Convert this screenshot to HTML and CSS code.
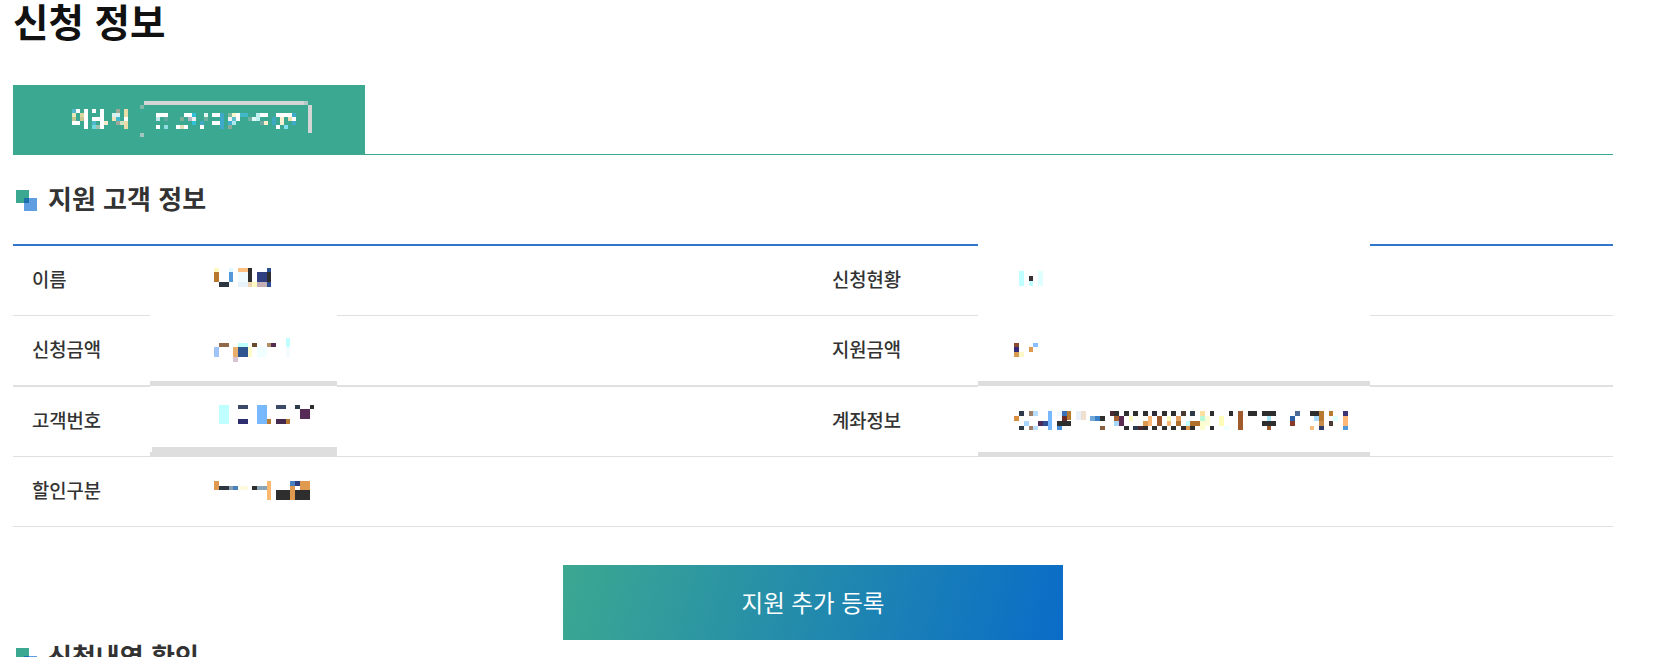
FILE: index.html
```html
<!DOCTYPE html>
<html lang="ko">
<head>
  <meta charset="UTF-8" />
  <title>신청 정보</title>
  <link rel="stylesheet" href="styles.css">
</head>
<body>
  <h1 class="page-title">신청 정보</h1>

  <div class="tab-bar">
    <div class="tab">
      <svg class="mosaic-tab" viewBox="0 0 780 135" width="260" height="45" aria-hidden="true">
        <rect x="237" y="18" width="480" height="12" fill="#d5d5d5"/><rect x="717" y="18" width="12" height="12" fill="#b5c9c5"/><rect x="729" y="30" width="12" height="84" fill="#d5d5d5"/><rect x="225" y="30" width="12" height="12" fill="#82b8aa"/><rect x="225" y="114" width="12" height="12" fill="#a5c6bf"/>
        <rect x="21" y="42" width="12" height="12" fill="#50b8c8"/><rect x="33" y="42" width="12" height="12" fill="#fff"/><rect x="21" y="54" width="12" height="12" fill="#e5e5b5"/><rect x="45" y="54" width="12" height="12" fill="#d8d8a0"/><rect x="21" y="66" width="12" height="12" fill="#c0c890"/><rect x="45" y="66" width="12" height="12" fill="#c8c890"/><rect x="21" y="78" width="24" height="12" fill="#fff"/><rect x="57" y="42" width="12" height="60" fill="#fff"/>
        <rect x="81" y="42" width="12" height="12" fill="#fff"/><rect x="81" y="66" width="24" height="12" fill="#fff"/><rect x="81" y="78" width="12" height="12" fill="#50b8c8"/><rect x="105" y="42" width="12" height="48" fill="#fff"/><rect x="81" y="90" width="12" height="12" fill="#70d8e0"/><rect x="93" y="90" width="12" height="12" fill="#a0c0b0"/><rect x="117" y="78" width="12" height="12" fill="#f5e8c8"/><rect x="105" y="90" width="12" height="12" fill="#fff"/>
        <rect x="153" y="42" width="12" height="12" fill="#a0a898"/><rect x="141" y="54" width="24" height="12" fill="#d8f0f0"/><rect x="177" y="42" width="12" height="24" fill="#e8dca8"/><rect x="141" y="66" width="12" height="12" fill="#f0e4b8"/><rect x="153" y="66" width="12" height="12" fill="#40b8d0"/><rect x="177" y="66" width="12" height="12" fill="#fff"/><rect x="153" y="78" width="12" height="12" fill="#a0a898"/><rect x="165" y="78" width="12" height="12" fill="#d0e0c0"/><rect x="177" y="78" width="12" height="24" fill="#e8dca8"/>
        <rect x="273" y="54" width="36" height="12" fill="#fff"/><rect x="273" y="66" width="12" height="12" fill="#c0e8e8"/><rect x="297" y="66" width="12" height="12" fill="#60a8a0"/><rect x="273" y="90" width="12" height="12" fill="#fff"/><rect x="297" y="90" width="12" height="12" fill="#90dce0"/>
        <rect x="357" y="54" width="24" height="12" fill="#fff"/><rect x="381" y="54" width="12" height="12" fill="#30c0d8"/><rect x="345" y="66" width="12" height="12" fill="#80b098"/><rect x="369" y="66" width="12" height="12" fill="#b0b8c8"/><rect x="381" y="66" width="12" height="12" fill="#f0f0f0"/><rect x="381" y="78" width="12" height="12" fill="#30c0d8"/><rect x="333" y="90" width="12" height="12" fill="#fff"/><rect x="345" y="90" width="12" height="12" fill="#e0e0b8"/><rect x="357" y="90" width="12" height="12" fill="#fff"/>
        <rect x="417" y="54" width="12" height="12" fill="#e0f8f0"/><rect x="417" y="66" width="12" height="12" fill="#70b0a0"/><rect x="405" y="78" width="12" height="12" fill="#40a8c0"/><rect x="405" y="90" width="12" height="12" fill="#fff"/>
        <rect x="441" y="54" width="24" height="12" fill="#fff"/><rect x="465" y="54" width="12" height="48" fill="#40a8c8"/><rect x="441" y="78" width="24" height="12" fill="#fff"/>
        <rect x="489" y="54" width="12" height="12" fill="#80b8a0"/><rect x="501" y="54" width="12" height="12" fill="#f8f8d0"/><rect x="513" y="54" width="12" height="12" fill="#fff"/><rect x="525" y="54" width="24" height="12" fill="#40b8c8"/><rect x="489" y="66" width="12" height="12" fill="#f0f0f0"/><rect x="501" y="66" width="12" height="12" fill="#60c0d0"/><rect x="513" y="66" width="12" height="12" fill="#fff"/><rect x="489" y="78" width="12" height="12" fill="#40b0d0"/><rect x="501" y="78" width="12" height="12" fill="#b0e8f0"/><rect x="489" y="90" width="12" height="12" fill="#90a898"/>
        <rect x="549" y="66" width="12" height="12" fill="#70b0a0"/><rect x="561" y="66" width="12" height="12" fill="#e0f8f8"/><rect x="573" y="54" width="12" height="24" fill="#c0f0f0"/><rect x="585" y="54" width="24" height="12" fill="#fff"/><rect x="585" y="78" width="12" height="12" fill="#70a8a0"/><rect x="597" y="78" width="12" height="12" fill="#f8f0c8"/>
        <rect x="621" y="66" width="12" height="24" fill="#40a8c0"/><rect x="633" y="54" width="24" height="12" fill="#fff"/><rect x="645" y="66" width="12" height="24" fill="#f8f0d0"/><rect x="633" y="90" width="12" height="12" fill="#fff"/><rect x="657" y="54" width="24" height="12" fill="#fff"/><rect x="669" y="66" width="12" height="12" fill="#e8e0b8"/><rect x="681" y="54" width="12" height="12" fill="#40a8c8"/><rect x="681" y="66" width="12" height="12" fill="#fff"/><rect x="681" y="78" width="12" height="12" fill="#40a8c8"/><rect x="657" y="90" width="12" height="12" fill="#80e0f0"/>
      </svg>
    </div>
  </div>

  <h2 class="section-title">
    <svg class="section-icon" viewBox="0 0 21 21" width="21" height="21" aria-hidden="true">
      <rect x="8" y="8" width="13" height="13" fill="#5f9ee0"/>
      <rect x="0" y="0" width="13" height="13" fill="#3ba891"/>
      <rect x="8" y="8" width="5" height="5" fill="#1a70a8"/>
    </svg>
    <span class="section-text">지원 고객 정보</span>
  </h2>

  <div class="info-wrap">
    <div class="mask mask-left-1"></div>
    <div class="mask mask-left-2"></div>
    <div class="mask mask-right-1"></div>
    <div class="mask mask-right-2"></div>

    <table class="info-table">
      <colgroup>
        <col class="col-label"><col class="col-value"><col class="col-label-2"><col class="col-value-2">
      </colgroup>
      <tr>
        <th>이름</th>
        <td>
          <svg class="mosaic" viewBox="639 90 600 120" aria-hidden="true">
            <rect x="642" y="111" width="15" height="12" fill="#fdf9c0"/><rect x="642" y="123" width="15" height="30" fill="#b8782e"/><rect x="657" y="153" width="30" height="15" fill="#2d3640"/><rect x="687" y="111" width="12" height="12" fill="#e0f8ff"/><rect x="687" y="123" width="12" height="30" fill="#5298d8"/><rect x="714" y="111" width="30" height="12" fill="#fdc080"/><rect x="714" y="123" width="30" height="30" fill="#f0fbff"/><rect x="714" y="153" width="30" height="15" fill="#e8f2fb"/><rect x="744" y="111" width="12" height="42" fill="#2e2e2e"/><rect x="744" y="153" width="12" height="15" fill="#eed3b5"/><rect x="756" y="153" width="15" height="15" fill="#fdf9c0"/><rect x="771" y="123" width="30" height="30" fill="#2f3f80"/><rect x="771" y="153" width="30" height="15" fill="#c3afb5"/><rect x="801" y="111" width="12" height="12" fill="#2b4f90"/><rect x="801" y="123" width="12" height="30" fill="#2e2e2e"/><rect x="801" y="153" width="12" height="15" fill="#2b4f90"/>
          </svg>
        </td>
        <th>신청현황</th>
        <td>
          <svg class="mosaic mosaic-wide" viewBox="15 18 1080 120" aria-hidden="true">
            <rect x="57" y="48" width="15" height="45" fill="#c0ffff"/><rect x="87" y="63" width="12" height="15" fill="#3a2e34"/><rect x="87" y="78" width="12" height="15" fill="#c0ffff"/><rect x="114" y="48" width="15" height="45" fill="#e0ffff"/>
          </svg>
        </td>
      </tr>
      <tr class="row-thick">
        <th>신청금액</th>
        <td>
          <svg class="mosaic" viewBox="639 303 600 120" aria-hidden="true">
            <rect x="657" y="339" width="30" height="12" fill="#8e6a4a"/><rect x="642" y="351" width="15" height="30" fill="#a0c4f8"/><rect x="699" y="351" width="15" height="30" fill="#e8ae6c"/><rect x="699" y="381" width="15" height="15" fill="#d8c4d0"/><rect x="714" y="339" width="30" height="12" fill="#c0ffff"/><rect x="714" y="351" width="30" height="30" fill="#2e5590"/><rect x="744" y="351" width="12" height="30" fill="#fdfcc8"/><rect x="756" y="339" width="15" height="12" fill="#6a4a2c"/><rect x="771" y="351" width="30" height="30" fill="#f0ffff"/><rect x="801" y="339" width="12" height="12" fill="#b08e68"/><rect x="813" y="339" width="15" height="12" fill="#552b50"/><rect x="858" y="324" width="12" height="27" fill="#c0ffff"/><rect x="858" y="351" width="12" height="30" fill="#f4fbff"/>
          </svg>
        </td>
        <th>지원금액</th>
        <td>
          <svg class="mosaic mosaic-wide" viewBox="15 228 1080 120" aria-hidden="true">
            <rect x="42" y="264" width="15" height="12" fill="#8a4a30"/><rect x="42" y="276" width="15" height="15" fill="#352a78"/><rect x="42" y="291" width="15" height="15" fill="#d89a50"/><rect x="57" y="291" width="15" height="15" fill="#fdf8c8"/><rect x="99" y="264" width="15" height="12" fill="#88c0ff"/><rect x="87" y="276" width="12" height="15" fill="#e09a50"/>
          </svg>
        </td>
      </tr>
      <tr>
        <th>고객번호</th>
        <td>
          <svg class="mosaic" viewBox="639 516 600 120" aria-hidden="true">
            <rect x="657" y="525" width="30" height="57" fill="#c0ffff"/><rect x="714" y="525" width="30" height="12" fill="#3a4a68"/><rect x="714" y="567" width="30" height="15" fill="#2d2d70"/><rect x="771" y="525" width="30" height="57" fill="#78b8ff"/><rect x="801" y="567" width="12" height="15" fill="#b87a30"/><rect x="828" y="525" width="30" height="12" fill="#3a4a68"/><rect x="828" y="567" width="30" height="15" fill="#452a50"/><rect x="858" y="567" width="12" height="15" fill="#b87a30"/><rect x="885" y="525" width="15" height="12" fill="#2d3a48"/><rect x="930" y="525" width="12" height="12" fill="#2e2e2e"/><rect x="900" y="537" width="30" height="30" fill="#552a55"/>
          </svg>
        </td>
        <th>계좌정보</th>
        <td>
          <svg class="mosaic mosaic-wide" viewBox="0 0 1080 120" aria-hidden="true">
            <rect x="27" y="42" width="15" height="15" fill="#d89040"/><rect x="42" y="27" width="15" height="15" fill="#2e3a48"/><rect x="42" y="72" width="15" height="12" fill="#2e3a48"/><rect x="72" y="27" width="12" height="15" fill="#a08068"/><rect x="84" y="27" width="15" height="15" fill="#b8dcfc"/><rect x="57" y="57" width="15" height="15" fill="#a8d8ff"/><rect x="72" y="72" width="12" height="12" fill="#a08068"/><rect x="84" y="72" width="15" height="12" fill="#b8dcfc"/><rect x="99" y="57" width="15" height="15" fill="#4a2a58"/><rect x="114" y="57" width="15" height="15" fill="#2e5090"/><rect x="129" y="27" width="12" height="57" fill="#78b8ff"/><rect x="156" y="27" width="15" height="15" fill="#f0f8ff"/><rect x="171" y="27" width="15" height="15" fill="#3a70b8"/><rect x="186" y="27" width="12" height="27" fill="#b87a30"/><rect x="171" y="42" width="15" height="15" fill="#6a2a2a"/><rect x="156" y="57" width="42" height="15" fill="#2e2e2e"/><rect x="156" y="72" width="15" height="12" fill="#4a90d8"/><rect x="213" y="27" width="15" height="27" fill="#e8f0fa"/><rect x="228" y="27" width="15" height="27" fill="#f0e0d0"/><rect x="255" y="42" width="15" height="15" fill="#70a8d8"/><rect x="270" y="42" width="15" height="15" fill="#3a80c8"/><rect x="285" y="42" width="15" height="15" fill="#2e2e2e"/><rect x="285" y="72" width="15" height="12" fill="#8a6040"/><rect x="315" y="27" width="12" height="15" fill="#4a2a30"/><rect x="327" y="27" width="15" height="15" fill="#2e2e2e"/><rect x="327" y="42" width="15" height="15" fill="#a86030"/><rect x="342" y="42" width="15" height="30" fill="#5a2a50"/><rect x="327" y="57" width="15" height="15" fill="#a8d8ff"/><rect x="357" y="27" width="15" height="15" fill="#2e2e2e"/><rect x="357" y="72" width="15" height="12" fill="#2e2e2e"/><rect x="372" y="42" width="12" height="15" fill="#fdfcc0"/><rect x="384" y="27" width="15" height="15" fill="#2e2e2e"/><rect x="384" y="72" width="15" height="12" fill="#2e3a50"/><rect x="399" y="72" width="15" height="12" fill="#4a2a30"/><rect x="414" y="27" width="15" height="15" fill="#2e2e2e"/><rect x="414" y="57" width="15" height="15" fill="#e09a50"/><rect x="414" y="72" width="15" height="12" fill="#2e2e2e"/><rect x="429" y="42" width="12" height="30" fill="#fdb878"/><rect x="441" y="27" width="15" height="15" fill="#2e2e3a"/><rect x="441" y="72" width="15" height="12" fill="#2e2e2e"/><rect x="456" y="42" width="15" height="30" fill="#a05a2c"/><rect x="471" y="27" width="15" height="15" fill="#2e2e2e"/><rect x="471" y="72" width="15" height="12" fill="#2e2e2e"/><rect x="486" y="42" width="12" height="15" fill="#fdfcc0"/><rect x="486" y="57" width="12" height="15" fill="#fdb878"/><rect x="498" y="27" width="15" height="15" fill="#2e2e2e"/><rect x="498" y="72" width="15" height="12" fill="#2e2e2e"/><rect x="513" y="42" width="15" height="15" fill="#e8a060"/><rect x="513" y="57" width="15" height="15" fill="#b0702c"/>
            <g transform="translate(525 0)">
              <rect x="3" y="27" width="15" height="15" fill="#4a3a30"/><rect x="30" y="27" width="15" height="15" fill="#2e3a48"/><rect x="3" y="72" width="15" height="12" fill="#2e2e2e"/><rect x="18" y="57" width="12" height="15" fill="#c0ffff"/><rect x="18" y="72" width="12" height="12" fill="#e09a50"/><rect x="30" y="57" width="30" height="15" fill="#b0702c"/><rect x="30" y="72" width="15" height="12" fill="#2e2e2e"/><rect x="60" y="27" width="15" height="15" fill="#fde0a0"/><rect x="60" y="42" width="15" height="15" fill="#b8f8d8"/><rect x="75" y="42" width="15" height="30" fill="#fdfcd8"/><rect x="60" y="57" width="15" height="27" fill="#fdfcd0"/><rect x="90" y="27" width="12" height="15" fill="#2e2e2e"/><rect x="90" y="72" width="12" height="12" fill="#2e2e2e"/><rect x="117" y="42" width="15" height="30" fill="#fdfcb8"/><rect x="132" y="72" width="15" height="12" fill="#f0ffff"/><rect x="147" y="27" width="12" height="15" fill="#2e2e2e"/><rect x="174" y="27" width="15" height="57" fill="#a05a2c"/><rect x="204" y="27" width="27" height="15" fill="#2e2e2e"/><rect x="246" y="27" width="42" height="15" fill="#2e2e2e"/><rect x="261" y="42" width="12" height="15" fill="#a8e8ff"/><rect x="246" y="57" width="42" height="15" fill="#2e2e2e"/><rect x="261" y="72" width="12" height="12" fill="#a05a2c"/><rect x="345" y="27" width="15" height="15" fill="#4a6a98"/><rect x="330" y="42" width="15" height="15" fill="#2e60a8"/><rect x="330" y="57" width="15" height="15" fill="#8a3a2c"/><rect x="390" y="72" width="12" height="12" fill="#f5bc80"/><rect x="390" y="27" width="27" height="15" fill="#2e2e2e"/><rect x="402" y="42" width="15" height="15" fill="#a8dcff"/><rect x="417" y="27" width="15" height="30" fill="#b87a30"/><rect x="417" y="57" width="15" height="15" fill="#c88e50"/><rect x="417" y="72" width="15" height="12" fill="#2e3a68"/><rect x="447" y="27" width="12" height="15" fill="#b87a30"/><rect x="459" y="42" width="15" height="15" fill="#e0ffff"/><rect x="447" y="57" width="12" height="15" fill="#4a3a34"/><rect x="489" y="27" width="15" height="15" fill="#3d3478"/><rect x="489" y="42" width="15" height="30" fill="#fdb878"/><rect x="489" y="72" width="15" height="12" fill="#5298d8"/>
            </g>
          </svg>
        </td>
      </tr>
      <tr>
        <th>할인구분</th>
        <td>
          <svg class="mosaic" viewBox="639 726 600 120" aria-hidden="true">
            <rect x="642" y="753" width="15" height="27" fill="#e09a50"/><rect x="657" y="768" width="30" height="12" fill="#2e3640"/><rect x="687" y="768" width="12" height="12" fill="#8aa0b0"/><rect x="699" y="768" width="15" height="12" fill="#4a80c0"/><rect x="714" y="768" width="30" height="12" fill="#fdfae0"/><rect x="756" y="768" width="15" height="12" fill="#2e2e2e"/><rect x="771" y="768" width="30" height="12" fill="#8aa5b8"/><rect x="801" y="753" width="12" height="57" fill="#fdb870"/><rect x="828" y="780" width="42" height="30" fill="#2e2e2e"/><rect x="870" y="753" width="15" height="15" fill="#4a80c0"/><rect x="885" y="753" width="15" height="15" fill="#2d3f80"/><rect x="900" y="753" width="30" height="27" fill="#e09a50"/><rect x="870" y="768" width="15" height="42" fill="#e09a50"/><rect x="885" y="780" width="45" height="30" fill="#2e2e2e"/>
          </svg>
        </td>
        <th></th>
        <td></td>
      </tr>
    </table>
  </div>

  <div class="actions">
    <button class="add-btn" type="button">지원 추가 등록</button>
  </div>

  <h2 class="section-title section-title-next">
    <svg class="section-icon" viewBox="0 0 21 21" width="21" height="21" aria-hidden="true">
      <rect x="8" y="8" width="13" height="13" fill="#5f9ee0"/>
      <rect x="0" y="0" width="13" height="13" fill="#3ba891"/>
      <rect x="8" y="8" width="5" height="5" fill="#1a70a8"/>
    </svg>
    <span class="section-text">신청내역 확인</span>
  </h2>
</body>
</html>
```

FILE: styles.css
```css
html, body { height: 100%; overflow: hidden; }
body {
  margin: 0;
  padding: 0 45px 0 13px;
  background: #fff;
  color: #333;
  font-family: "Noto Sans CJK KR", "Noto Sans", sans-serif;
}

.page-title {
  margin: 0 0 45px;
  height: 40px;
  font-size: 38.5px;
  line-height: 40px;
  font-weight: 700;
  color: #111;
}

.tab-bar {
  display: flex;
  height: 70px;
  border-bottom: 1px solid #3ba891;
  box-sizing: border-box;
}
.tab {
  width: 352px;
  height: 70px;
  padding: 10px 0 0 52px;
  box-sizing: border-box;
  background: #3ba891;
}
.mosaic-tab { display: block; shape-rendering: crispEdges; }

.section-title {
  display: flex;
  align-items: center;
  gap: 11px;
  height: 30px;
  margin: 30px 0 29px;
  padding-left: 3px;
  font-size: 26px;
  line-height: 30px;
  font-weight: 700;
  color: #333;
}
.section-title-next { margin-top: 3px; }
.section-icon { flex: none; }
.section-text { margin-bottom: 4px; }

.info-wrap { position: relative; }

.info-table {
  position: relative;
  width: 100%;
  table-layout: fixed;
  border-collapse: separate;
  border-spacing: 0;
  border-top: 2px solid #3176cc;
}
.col-label { width: 200px; }
.col-value { width: 600px; }
.col-label-2 { width: 192px; }
.col-value-2 { width: 608px; }

.info-table th, .info-table td {
  height: 69px;
  padding: 0;
  border-bottom: 1px solid #e0e0e0;
  vertical-align: middle;
}
.info-table th {
  padding: 0 0 4px 19px;
  box-sizing: border-box;
  text-align: left;
  font-size: 18.8px;
  font-weight: 500;
  color: #333;
}
.row-thick th, .row-thick td { border-bottom-width: 2px; }

.mosaic {
  position: relative;
  z-index: 2;
  display: block;
  width: 200px;
  height: 40px;
  shape-rendering: crispEdges;
}
.mosaic-wide { width: 360px; }

/* white patches over the table, grey edge at the bottom */
.mask {
  position: absolute;
  z-index: 1;
  background: #fff;
  box-sizing: border-box;
  border-bottom: 5px solid #dedede;
}
.mask-left-1 { left: 137px; top: 71px; width: 187px; height: 71px; }
.mask-left-2 { left: 137px; top: 142px; width: 187px; height: 71px; }
.mask-left-2::after {
  content: "";
  position: absolute;
  left: 2px;
  right: 0;
  bottom: 0;
  height: 5px;
  background: #dedede;
}
.mask-right-1 { left: 965px; top: 0; width: 392px; height: 142px; }
.mask-right-2 { left: 965px; top: 142px; width: 392px; height: 71px; }

.actions {
  display: flex;
  justify-content: center;
  margin-top: 38px;
}
.add-btn {
  width: 500px;
  height: 75px;
  padding-bottom: 2px;
  border: none;
  background: linear-gradient(105deg, #3ba891 0%, #0a6cc8 100%);
  color: #fff;
  font-family: inherit;
  font-size: 23.5px;
  cursor: pointer;
}
```
